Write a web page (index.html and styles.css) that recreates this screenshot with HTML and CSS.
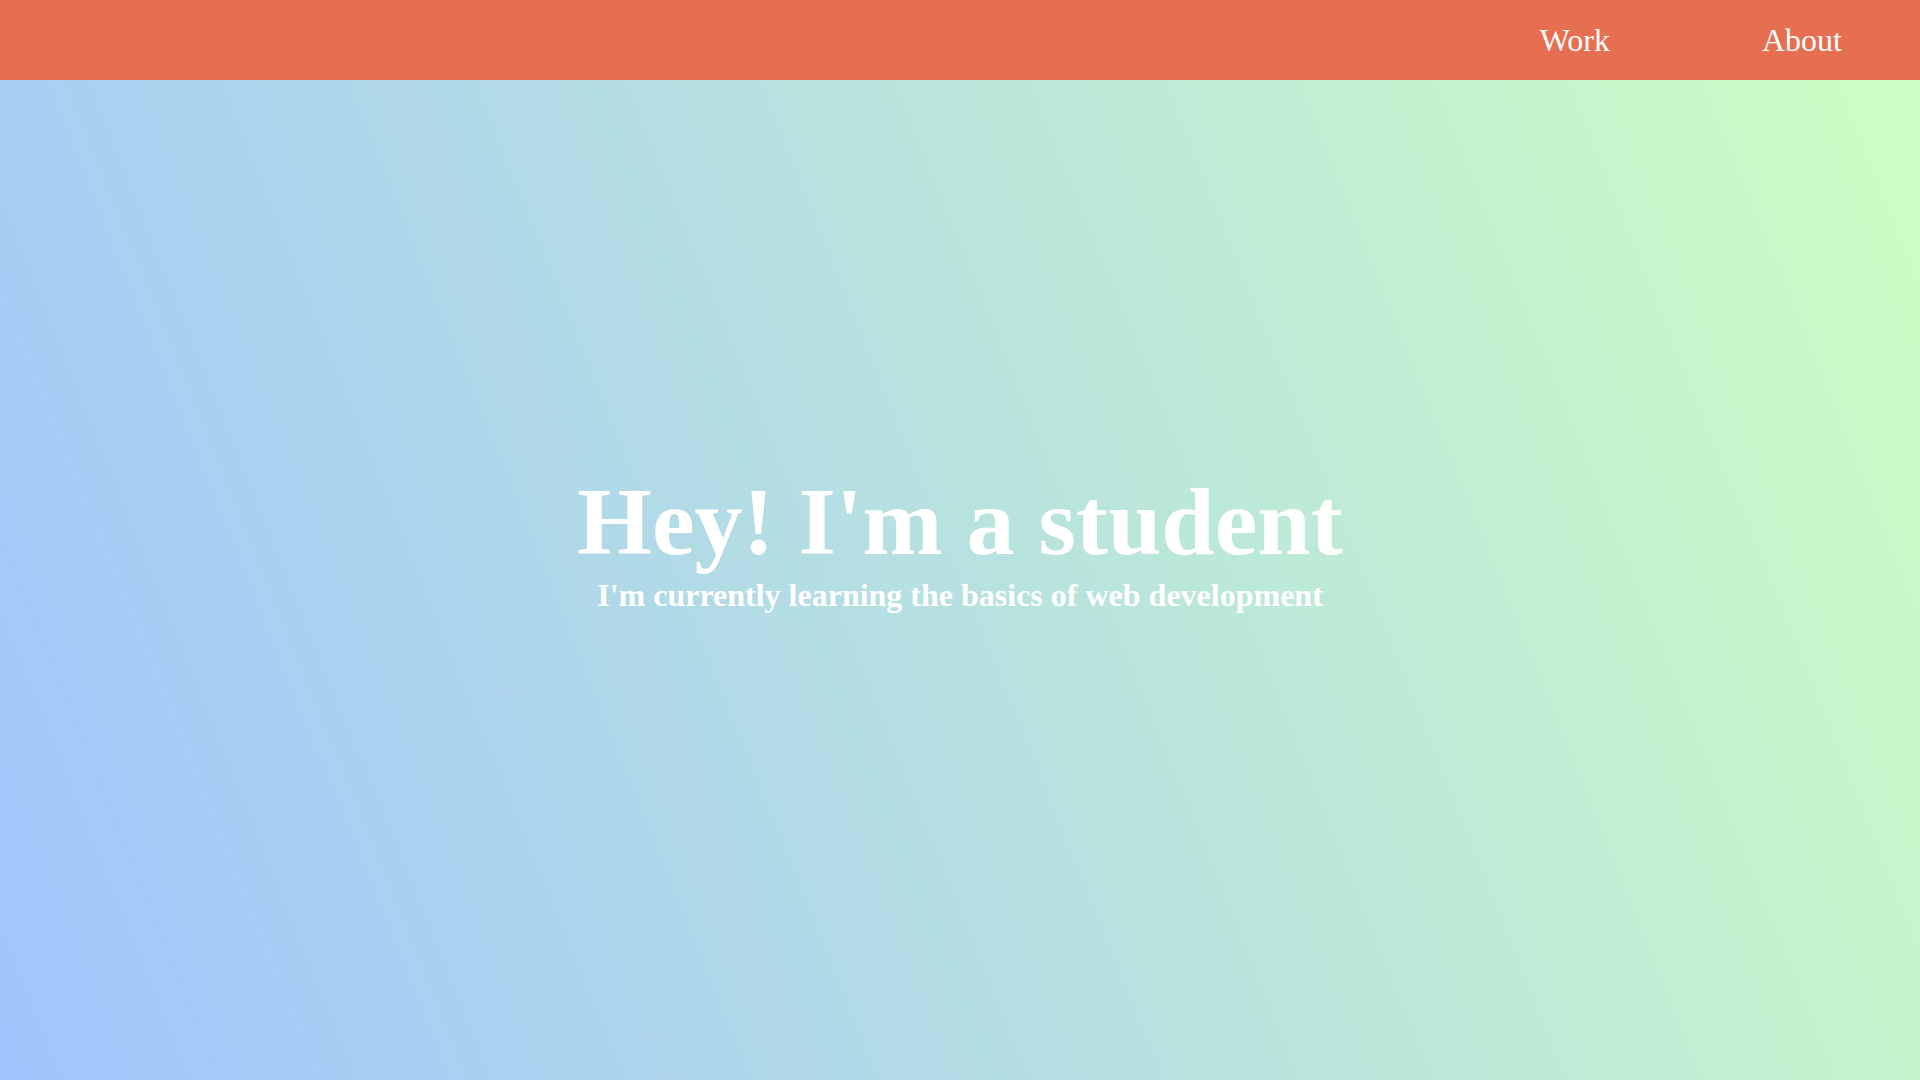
FILE: index.html
```html
<!DOCTYPE html>
<html lang="en">
<head>
<meta charset="utf-8">
<title>Student</title>
<link rel="stylesheet" href="styles.css">
</head>
<body>
<header class="site-header">
  <nav class="nav">
    <a class="nav-link" href="#">Work</a>
    <a class="nav-link" href="#">About</a>
  </nav>
</header>
<main class="hero">
  <h1 class="hero-title">Hey! I'm a student</h1>
  <p class="hero-sub">I'm currently learning the basics of web development</p>
</main>
</body>
</html>
```
FILE: styles.css
```css
html, body {
  margin: 0;
  padding: 0;
}
body {
  font-family: "Liberation Serif", "Times New Roman", serif;
  color: #fff;
  min-height: 100vh;
  background: linear-gradient(68deg, #a1c4fd 0%, #cdffc2 100%);
}
.site-header {
  position: fixed;
  top: 0;
  left: 0;
  right: 0;
  height: 80px;
  background: #e76f51;
  display: flex;
  justify-content: flex-end;
  align-items: center;
  z-index: 10;
}
.nav {
  display: flex;
  gap: 152px;
  padding-right: 78px;
}
.nav-link {
  color: #fff;
  text-decoration: none;
  font-size: 32px;
}
.hero {
  height: 100vh;
  display: flex;
  flex-direction: column;
  align-items: center;
  justify-content: center;
  text-align: center;
}
.hero-title {
  margin: 0;
  font-size: 96px;
  font-weight: bold;
}
.hero-sub {
  margin: 0;
  font-size: 32px;
  font-weight: bold;
}
```
